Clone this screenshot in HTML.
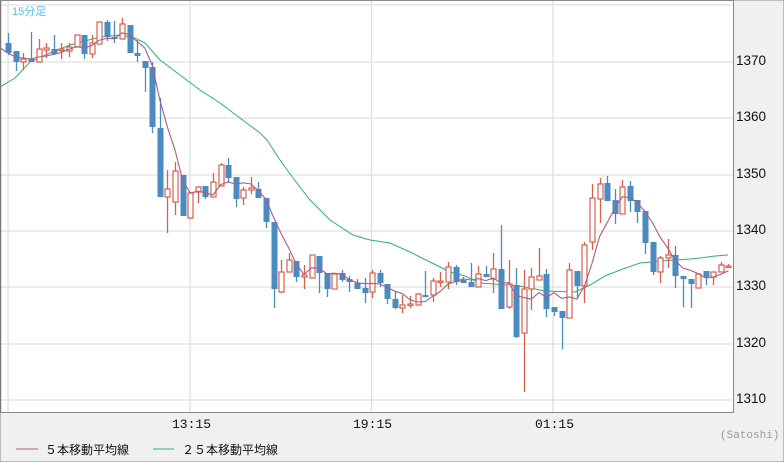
<!DOCTYPE html>
<html><head><meta charset="utf-8"><style>
html,body{margin:0;padding:0;background:#f0f0f0;}
body{width:784px;height:462px;position:relative;overflow:hidden;font-family:"Liberation Sans","Noto Sans CJK JP",sans-serif;}
.t{position:absolute;font-size:12px;color:#111;}
.p{font-size:13.5px;}
.m{font-family:"Liberation Mono",monospace;font-size:13px;}
</style></head><body>
<svg id="s" width="784" height="462" style="position:absolute;left:0;top:0" xmlns="http://www.w3.org/2000/svg">
<rect x="0" y="0" width="784" height="462" fill="#f0f0f0" stroke="#888" stroke-width="1"/>
<rect x="1" y="1" width="732" height="411" fill="#fff"/>
<g stroke="#e0e0e0" stroke-width="1.3">
<line x1="1" y1="5" x2="733" y2="5"/><line x1="1" y1="62" x2="733" y2="62"/><line x1="1" y1="118" x2="733" y2="118"/><line x1="1" y1="175" x2="733" y2="175"/><line x1="1" y1="231" x2="733" y2="231"/><line x1="1" y1="287" x2="733" y2="287"/><line x1="1" y1="344" x2="733" y2="344"/><line x1="1" y1="400" x2="733" y2="400"/>
<line x1="8" y1="1" x2="8" y2="412"/><line x1="190" y1="1" x2="190" y2="412"/><line x1="371.5" y1="1" x2="371.5" y2="412"/><line x1="553" y1="1" x2="553" y2="412"/>
</g>
<polyline fill="none" stroke="#2db36e" stroke-width="1" points="0,87 15,78 30,62 50,53 70,45 100,37 120,35 135,38 145,43 160,60 180,75 200,90 220,103 240,118 260,133 267,140 280,160 293,178 310,200 330,220 353,235 370,240 390,243 410,252 430,262 450,272 465,276 480,283 520,286 545,291 575,292 590,285 605,276 620,270 640,263 660,261 690,259 700,258 715,256 728,255"/>
<g id="c"></g>
<line x1="0.5" y1="0" x2="0.5" y2="413" stroke="#777" stroke-width="1.5"/>
<line x1="0" y1="412.5" x2="733" y2="412.5" stroke="#888" stroke-width="1"/>
<line x1="733.5" y1="0" x2="733.5" y2="413" stroke="#888" stroke-width="1"/>
<line x1="0" y1="0.5" x2="733" y2="0.5" stroke="#888" stroke-width="1"/>
<line x1="16" y1="449" x2="38" y2="449" stroke="#b05a80" stroke-width="1"/>
<line x1="153" y1="449" x2="174" y2="449" stroke="#2db36e" stroke-width="1"/>
</svg>
<div class="t" style="left:12px;top:3px;color:#4fc3f7;font-size:11px;">15分足</div>
<div class="t p" style="left:736px;top:53px;">1370</div>
<div class="t p" style="left:736px;top:109px;">1360</div>
<div class="t p" style="left:736px;top:166px;">1350</div>
<div class="t p" style="left:736px;top:222px;">1340</div>
<div class="t p" style="left:736px;top:278px;">1330</div>
<div class="t p" style="left:736px;top:335px;">1320</div>
<div class="t p" style="left:736px;top:391px;">1310</div>
<div class="t m" style="left:172px;top:417px;">13:15</div>
<div class="t m" style="left:353px;top:417px;">19:15</div>
<div class="t m" style="left:535px;top:417px;">01:15</div>
<div class="t m" style="left:720px;top:430px;font-size:11px;color:#999;">(Satoshi)</div>
<div class="t" style="left:45px;top:441px;">５本移動平均線</div>
<div class="t" style="left:182px;top:441px;">２５本移動平均線</div>
<script>
var d=[
"b 33 55 43 53","b 51 71 51 62","r 53 70 59 62","b 32 62 59 62","r 39 62 49 62","r 43 58 48 50","b 35 55 49 54","r 43 59 49 50","r 43 57 47 51","r 35 47 35 47",
"b 35 59 35 54","r 35 58 43 54","r 22 44 22 44","b 20 41 22 37","b 21 43 37 38","r 18 39 24 39","b 25 53 25 53","b 40 62 53 56","b 61 92 61 68","b 62 133 67 127",
"b 98 197 128 197","r 170 233 189 197","r 162 215 171 202","b 175 216 175 216","r 192 219 193 218","r 186 203 187 192","b 186 199 186 197","r 173 197 182 197","r 163 186 165 186","b 158 183 165 178",
"b 177 207 177 199","r 187 205 190 198","r 177 194 188 190","b 182 198 189 198","b 198 228 198 222","b 222 308 222 289","r 260 293 272 292","r 253 272 260 272","b 261 282 261 277","r 265 289 275 277",
"r 255 278 255 278","b 256 293 256 273","b 273 297 273 289","r 274 289 274 289","b 270 282 273 280","b 276 292 279 282","b 279 289 283 289","b 278 303 288 293","r 270 298 273 292","b 270 287 273 283",
"b 284 304 284 299","b 292 309 299 308","r 295 313 305 308","r 296 308 304 305","r 293 305 294 305","b 271 297 295 297","r 278 302 281 295","r 272 287 281 282","r 262 289 267 282","b 265 285 267 282",
"b 277 283 280 283","b 263 287 282 287","r 266 287 274 287","b 266 277 274 277","r 253 293 269 279","b 225 309 269 309","r 260 309 284 307","b 268 338 285 337","r 270 392 289 333","r 268 310 277 289",
"r 248 280 276 280","b 269 317 274 309","b 307 316 307 312","b 311 349 311 318","r 263 318 270 318","b 271 298 271 286","r 242 303 245 286","r 184 250 198 242","r 178 223 184 199","b 176 201 183 201",
"b 189 224 200 214","r 180 214 187 214","b 181 212 186 201","b 200 223 200 212","b 211 254 211 243","b 242 275 242 272","r 256 283 258 272","r 239 268 255 258","b 246 288 255 276","b 276 307 276 279",
"b 279 308 279 284","r 274 288 274 288","b 271 285 271 277","r 272 285 272 277","r 262 272 265 272","r 264 267 266 267"];
var g=document.getElementById('c'),h='',cl=[],pts=[];
for(var i=0;i<d.length;i++){var a=d[i].split(' '),t=a[0],wt=+a[1],wb=+a[2],bt=+a[3],bb=+a[4];
var x=8.3+i*7.58,cx=Math.round(x)+0.5;
if(t=='b'){h+='<line x1="'+cx+'" y1="'+wt+'" x2="'+cx+'" y2="'+wb+'" stroke="#4a8bc2" stroke-width="1.3"/>';
h+='<rect x="'+(cx-3)+'" y="'+bt+'" width="6" height="'+Math.max(bb-bt,2)+'" fill="#4a8bc2"/>';cl.push(bb);}
else{h+='<line x1="'+cx+'" y1="'+wt+'" x2="'+cx+'" y2="'+wb+'" stroke="#d9604a" stroke-width="1.3"/>';
h+='<rect x="'+(cx-2.5)+'" y="'+bt+'" width="5" height="'+Math.max(bb-bt,1.5)+'" fill="#fff" stroke="#d9604a" stroke-width="1.2"/>';cl.push(bt);}
var s=0,n=0;for(var j=Math.max(0,i-4);j<=i;j++){s+=cl[j];n++;}pts.push(x.toFixed(1)+','+(s/n).toFixed(1));}
h+='<polyline fill="none" stroke="#b05a80" stroke-width="1.1" points="0,48 '+pts.join(' ')+'"/>';
g.innerHTML=h;
</script>
</body></html>
